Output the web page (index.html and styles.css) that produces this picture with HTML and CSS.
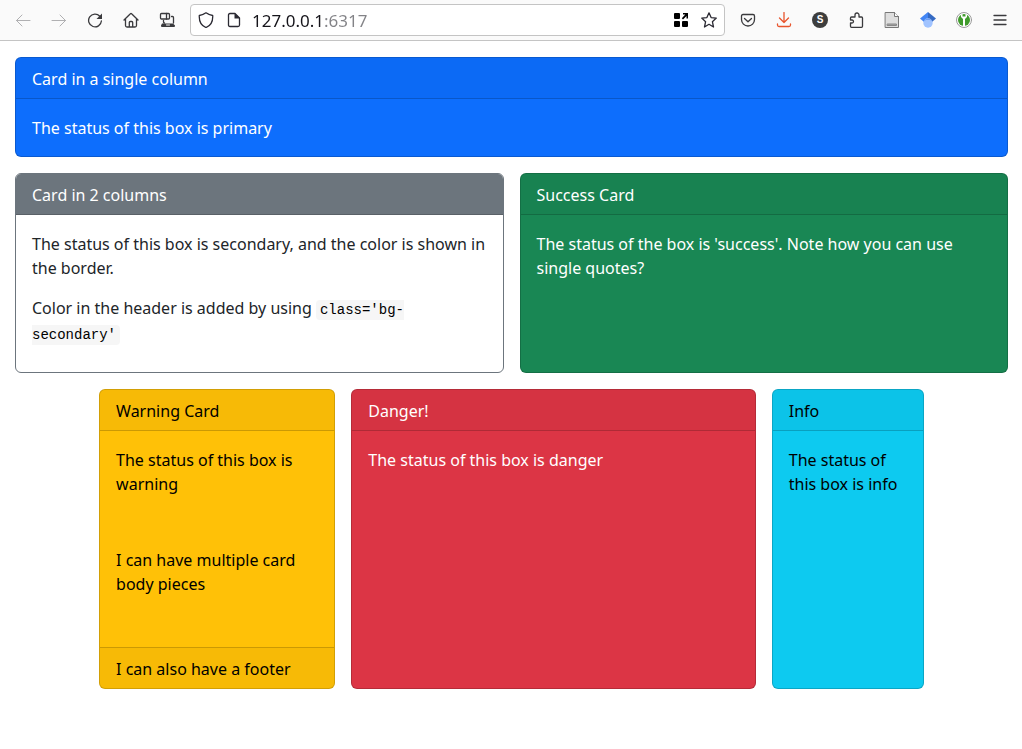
FILE: index.html
```html
<!DOCTYPE html>
<html lang="en">
<head>
<meta charset="utf-8">
<meta name="viewport" content="width=device-width, initial-scale=1">
<title>Dashboard cards</title>
<link rel="stylesheet" href="styles.css">
</head>
<body>
<header class="toolbar">
  <nav class="tools" aria-label="Navigation">
    <button class="tool faded" aria-label="Back" disabled><svg class="icon" viewBox="0 0 16 16"><path d="M15 8.500H1.500M7 3 1.500 8.500 7 14"/></svg></button>
    <button class="tool faded" aria-label="Forward" disabled><svg class="icon" viewBox="0 0 16 16"><path d="M1 8.500h13.500M9 3l5.500 5.500L9 14"/></svg></button>
    <button class="tool" aria-label="Reload"><svg class="icon" viewBox="0 0 16 16"><path class="bold" d="M12.800 4.200A6.400 6.400 0 1 0 14.400 9"/><path class="solid" d="M15 1.500v5.500H9.500z"/></svg></button>
    <button class="tool" aria-label="Home"><svg class="icon" viewBox="0 0 16 16"><path class="bold" d="M1 8 7.400 1.700a.8.800 0 0 1 1.200 0L15 8M2.500 7v6.500q0 1.500 1.500 1.500h8q1.500 0 1.500-1.500V7M6.300 15v-4.500q0-1 1-1h1.400q1 0 1 1V15"/></svg></button>
    <button class="tool" aria-label="Devices"><svg class="icon" viewBox="0 0 16 16"><rect class="bold" x="1.500" y="1.500" width="9" height="5.500" rx="1"/><path class="bold" d="M7.500 1.500V7M4.500 8.500v1.500q0 1 1 1M12.500 4.500h1q1 0 1 1V11"/><path class="solid" d="M3 11.500h11l2 2v.5q0 1-1 1H3q-1 0-1-1v-.5z"/><path class="light" d="M7.500 13h3"/></svg></button>
  </nav>
  <div class="address">
    <svg class="icon" viewBox="0 0 16 16"><path class="bold" d="M8 .8q3.500 2.500 6.700 2.700C15 9 13 13.500 8 15.500 3 13.500 1 9 1.300 3.500 4.500 3.300 8 .8 8 .8z"/></svg>
    <svg class="icon" viewBox="0 0 16 16"><path class="bold" d="M4 1.500h5l4.500 4.500v7q0 1.500-1.500 1.500H4q-1.500 0-1.500-1.500V3q0-1.500 1.500-1.500z"/><path class="solid" d="M8.500 1v5.500H14z"/></svg>
    <input class="url" type="text" aria-label="Address" value="127.0.0.1:6317">
    <svg class="icon black" viewBox="0 0 16 16"><path class="solid" d="M1 2q0-1 1-1h4q1 0 1 1v4q0 1-1 1H2Q1 7 1 6zM1 10q0-1 1-1h4q1 0 1 1v4q0 1-1 1H2q-1 0-1-1zM9 10q0-1 1-1h4q1 0 1 1v4q0 1-1 1h-4q-1 0-1-1zM10 1h5v5.500h-1.500V4L10 7.500 8.800 6.200 12.300 2.500H10z"/></svg>
    <svg class="icon" viewBox="0 0 16 16"><path class="bold" d="m8 .8 2.100 4.800 5.200.5-3.900 3.600 1.100 5.300L8 12.300 3.500 15l1.100-5.300L.7 6.100l5.200-.5z"/></svg>
  </div>
  <div class="tools">
    <button class="tool" aria-label="Pocket"><svg class="icon" viewBox="0 0 16 16"><path class="bold" d="M3 2.500h10q1.500 0 1.500 1.500v3.500a6.500 6.500 0 0 1-13 0V4q0-1.500 1.500-1.500zM4.500 6.500 8 9.800l3.500-3.300"/></svg></button>
    <button class="tool orange" aria-label="Downloads"><svg class="icon" viewBox="0 0 16 16"><path class="bold" d="M8 .5v10M3.500 6 8 10.500 12.500 6M1.500 12v1q0 1.500 1.500 1.500h10q1.500 0 1.500-1.500v-1"/></svg></button>
    <button class="tool" aria-label="Account"><span class="avatar">S</span></button>
    <button class="tool" aria-label="Extensions"><svg class="icon" viewBox="0 0 16 16"><path class="bold" d="M2.500 11v3.300q0 1 1 1h10q1 0 1-1V6q0-1-1-1h-2.500V3a2 2 0 0 0-4 0v2H3.500q-1 0-1 1v2H4a1.500 1.500 0 0 1 0 3z"/></svg></button>
    <button class="tool" aria-label="Notes"><svg class="icon" viewBox="0 0 16 16"><path fill="#dedede" stroke="#777" d="M1.500.5h9l4 4v11h-13z"/><path fill="#fff" stroke="#777" d="M10.500.5v4h4"/><path fill="#aaa" stroke="#888" d="M3.500 12h9v1.500h-9z"/></svg></button>
    <button class="tool" aria-label="Scholar"><svg class="icon" viewBox="0 0 16 16"><path fill="#4285f4" stroke="none" d="M8 0 0 6.500 4 10l4-3z"/><path fill="#356ac3" stroke="none" d="m8 0 8 6.500L12 10 8 7z"/><circle cx="8" cy="11" r="4.700" fill="#a0c3ff" stroke="none"/><path fill="#4c86e8" stroke="none" d="M3.500 9.500Q8 4 12.500 9.500 8 5.500 3.500 9.500z"/></svg></button>
    <button class="tool" aria-label="Password manager"><svg class="icon" viewBox="0 0 16 16"><circle cx="8" cy="8" r="7.500" fill="#fff" stroke="#999"/><circle cx="8" cy="8" r="6" fill="#409b2c" stroke="none"/><path fill="#fff" stroke="none" d="M5 2.500v2.500l2 2V14h2V7l2-2V2.500L9.500 2v2.500h-3V2z"/></svg></button>
    <button class="tool" aria-label="Menu"><svg class="icon" viewBox="0 0 16 16"><path class="bold" d="M2 3.500h12M2 8h12M2 12.500h12"/></svg></button>
  </div>
</header>
<main class="page">
  <section class="card primary wide">
    <div class="card-header">Card in a single column</div>
    <div class="card-body"><p>The status of this box is primary</p></div>
  </section>
  <section class="card secondary half">
    <div class="card-header">Card in 2 columns</div>
    <div class="card-body">
      <p>The status of this box is secondary, and the color is shown in the border.</p>
      <p>Color in the header is added by using <code>class='bg-secondary'</code></p>
    </div>
  </section>
  <section class="card success half">
    <div class="card-header">Success Card</div>
    <div class="card-body"><p>The status of the box is 'success'. Note how you can use single quotes?</p></div>
  </section>
  <section class="card warning narrow">
    <div class="card-header">Warning Card</div>
    <div class="card-body"><p>The status of this box is warning</p></div>
    <div class="card-body"><p>I can have multiple card body pieces</p></div>
    <div class="card-footer">I can also have a footer</div>
  </section>
  <section class="card danger medium">
    <div class="card-header">Danger!</div>
    <div class="card-body"><p>The status of this box is danger</p></div>
  </section>
  <section class="card info small">
    <div class="card-header">Info</div>
    <div class="card-body"><p>The status of this box is info</p></div>
  </section>
</main>
</body>
</html>
```

FILE: styles.css
```css
* { box-sizing: border-box; }
body {
  margin: 0;
  background: #fff;
  color: #212529;
  font: 16px/24px "Noto Sans", sans-serif;
}
p { margin: 0; }
p + p { margin-top: 16px; }

.toolbar {
  display: flex;
  align-items: center;
  gap: 5px;
  padding: 4px 4px 4px 5px;
  background: #fafafa;
  border-bottom: 1px solid #c4c4c4;
}
.tools { display: flex; }
.tool {
  display: flex;
  align-items: center;
  justify-content: center;
  width: 36px;
  height: 32px;
  padding: 0;
  border: 0;
  background: none;
  color: #3a3a3d;
}
.faded { color: #b0b0b2; }
.orange { color: #e8552d; }
.icon {
  flex: none;
  width: 16px;
  height: 16px;
  fill: none;
  stroke: currentColor;
  stroke-width: 1;
  stroke-linejoin: round;
  stroke-linecap: round;
}
.icon .bold { stroke-width: 1.3; }
.icon .solid { fill: currentColor; stroke: none; }
.icon .light { stroke: #fafafa; }
.black { color: #000; }
.avatar {
  width: 16px;
  height: 16px;
  border-radius: 50%;
  background: #3d3d3d;
  color: #fff;
  font: bold 10px/16px "Liberation Sans", sans-serif;
}
.address {
  display: flex;
  flex: 1;
  align-items: center;
  gap: 12px;
  height: 32px;
  padding: 0 7px;
  border: 1px solid #c4c4c4;
  border-radius: 4px;
  background: #fff;
  color: #2b2a33;
}
.url {
  flex: 1;
  min-width: 0;
  padding: 1px 0 0;
  margin-left: -2px;
  border: 0;
  outline: 0;
  /* The host is dark and the port after it is dimmed. */
  background: linear-gradient(to right, #15141a 71px, #838387 71px) text;
  color: transparent;
  font: 17px/24px "Noto Sans", sans-serif;
}

.page {
  display: grid;
  grid-template-columns: repeat(12, minmax(0, 1fr));
  grid-template-rows: minmax(100px, auto) minmax(200px, auto) minmax(300px, auto);
  gap: 16px;
  padding: 16px 14px 16px 15px;
}
.wide { grid-column: 1 / -1; }
.half { grid-column: span 6; }
.narrow { grid-column: 2 / span 3; }
.medium { grid-column: span 5; }
.small { grid-column: span 2; }

.card {
  display: flex;
  flex-direction: column;
  border: 1px solid rgba(0, 0, 0, 0.176);
  border-radius: 6px;
  overflow: hidden;
}
.card-header,
.card-footer {
  padding: 9px 16px 7px;
  background: rgba(0, 0, 0, 0.03);
}
.card-header { border-bottom: 1px solid rgba(0, 0, 0, 0.176); }
.card-footer { margin-top: auto; border-top: 1px solid rgba(0, 0, 0, 0.176); }
.card-body { padding: 17px 16px 15px; }
.card-body + .card-body { margin-top: 20px; }

.primary { background: #0d6efd; color: #fff; }
.secondary { border-color: #6c757d; }
.secondary .card-header { background: #6c757d; color: #fff; }
.success { background: #198754; color: #fff; }
.warning { background: #ffc107; color: #000; }
.danger { background: #dc3545; color: #fff; }
.info { background: #0dcaf0; color: #000; }

code {
  padding: 2px 4px;
  border-radius: 4px;
  background: #f6f6f6;
  color: #000;
  font: 14px/22px "Liberation Mono", monospace;
}
```
